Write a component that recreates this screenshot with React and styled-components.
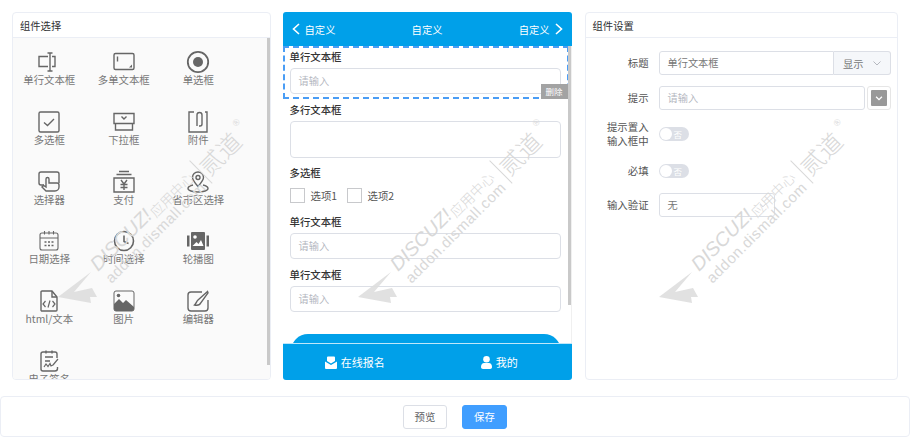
import React from 'react';
import styled, { createGlobalStyle } from 'styled-components';

const GlobalStyle = createGlobalStyle`
  html, body {
    margin: 0;
    padding: 0;
    background: #fff;
    font-family: "Noto Sans CJK SC", "Liberation Sans", sans-serif;
    color: #333;
  }
  * { box-sizing: border-box; }
`;

const Page = styled.div`
  position: relative;
  width: 910px;
  height: 437px;
  overflow: hidden;
`;

const Columns = styled.div`
  display: flex;
  gap: 12px;
  height: 396px;
  padding: 12px 12px 16px;
`;

const Panel = styled.section`
  width: ${(p) => p.$width}px;
  background: #fff;
  border: 1px solid #ebeef5;
  border-radius: 4px;
  display: flex;
  flex-direction: column;
  overflow: hidden;
`;

const PanelTitle = styled.div`
  height: 25px;
  flex: none;
  padding-left: 7px;
  font-size: 10.3px;
  line-height: 25px;
  color: #303133;
  border-bottom: 1px solid #ebeef5;
`;

const PickerBody = styled.div`
  position: relative;
  flex: 1;
  background: #fafafa;
  overflow: hidden;
`;

const PickerGrid = styled.div`
  display: grid;
  grid-template-columns: repeat(3, 74.5px);
  grid-auto-rows: 59.75px;
  padding-top: 12px;
  margin-left: -1px;
`;

const PickerItem = styled.div`
  display: flex;
  flex-direction: column;
  align-items: center;
  font-size: 10.4px;
  line-height: 14px;
  color: #777;
  white-space: nowrap;
`;

const IconBox = styled.svg`
  width: 24px;
  height: 24px;
  margin-bottom: -1px;
  fill: none;
  stroke: #666;
  stroke-width: 1.4;
  flex: none;
`;

const Scrollbar = styled.div`
  position: absolute;
  top: ${(p) => p.$top}px;
  right: 0;
  width: 3px;
  height: ${(p) => p.$height}px;
  background: #c9c9c9;
`;

const Phone = styled.section`
  width: 289px;
  flex: none;
  margin-right: 1px;
  display: flex;
  flex-direction: column;
  border-radius: 3px;
  overflow: hidden;
  background: #fff;
`;

const PhoneHeader = styled.header`
  height: 34px;
  flex: none;
  background: #00a0e9;
  color: #fff;
  font-size: 10.3px;
  display: grid;
  grid-template-columns: 1fr auto 1fr;
  align-items: center;
  padding: 0 8px;
`;

const HeaderSide = styled.div`
  display: flex;
  align-items: center;
  gap: 2px;
  justify-content: ${(p) => (p.$right ? 'flex-end' : 'flex-start')};
`;

const PhoneBody = styled.div`
  position: relative;
  flex: 1;
  overflow: hidden;
  border-right: 1px solid #f0f0f0;
`;

const Field = styled.div`
  position: relative;
  height: ${(p) => p.$height || 53}px;
  padding: 4px 8px 0 7px;
`;

const ActiveField = styled(Field)`
  width: 286px;
  height: 53px;
  padding: 2px 8px 0 5px;
  border: 2px dashed #4a9df5;
`;

const FieldLabel = styled.div`
  font-size: 10.4px;
  line-height: 14px;
  font-weight: 500;
  color: #333;
  margin-bottom: 4px;
`;

const FakeInput = styled.div`
  width: 271px;
  height: ${(p) => p.$height || 26}px;
  border: 1px solid #dcdfe6;
  border-radius: 4px;
  padding-left: 8px;
  font-size: 10.2px;
  line-height: 24px;
  color: #b5b8bf;
`;

const DeleteTag = styled.div`
  position: absolute;
  right: -1px;
  bottom: -2px;
  width: 27px;
  height: 15px;
  background: #a3a3a3;
  color: #fff;
  font-size: 8.5px;
  line-height: 15px;
  text-align: center;
`;

const CheckRow = styled.div`
  display: flex;
  align-items: center;
  margin-top: 8px;
  font-size: 10.4px;
  color: #555;
`;

const CheckBox = styled.span`
  width: 15px;
  height: 15px;
  border: 1px solid #c8c9cc;
  margin-right: 6px;
`;

const CheckText = styled.span`
  width: 36px;
`;

const SubmitButton = styled.div`
  position: absolute;
  left: 8px;
  bottom: -24px;
  width: 270px;
  height: 33px;
  background: #00a0e9;
  border-radius: 17px 17px 0 0;
`;

const TabBar = styled.nav`
  height: 37px;
  flex: none;
  background: #00a0e9;
  border-top: 1px solid #bfe7fa;
  display: grid;
  grid-template-columns: 1fr 1fr;
  color: #fff;
  font-size: 11px;
  position: relative;
`;

const Tab = styled.div`
  display: flex;
  align-items: center;
  justify-content: center;
  gap: 4px;
`;

const SettingsBody = styled.div`
  flex: 1;
  padding: 13px 6px 0 0;
`;

const FormRow = styled.div`
  display: flex;
  align-items: center;
  height: ${(p) => p.$height}px;
  margin-bottom: ${(p) => p.$gap || 0}px;
`;

const RowLabel = styled.label`
  width: 63px;
  margin-right: 10px;
  flex: none;
  text-align: right;
  font-size: 10.4px;
  line-height: 14px;
  color: #555;
`;

const TextBox = styled.div`
  flex: ${(p) => (p.$width ? 'none' : 1)};
  width: ${(p) => (p.$width ? `${p.$width}px` : 'auto')};
  height: 24px;
  border: 1px solid #dcdfe6;
  border-radius: 3px;
  padding: 0 6px 0 8px;
  font-size: 10.2px;
  line-height: 22px;
  color: ${(p) => (p.$placeholder ? '#b5b8bf' : '#777')};
  display: flex;
  align-items: center;
  justify-content: space-between;
  background: #fff;
`;

const InputGroup = styled.div`
  flex: 1;
  display: flex;
`;

const GroupInput = styled(TextBox)`
  border-radius: 3px 0 0 3px;
`;

const GroupSelect = styled.div`
  width: 57px;
  height: 24px;
  flex: none;
  background: #f5f7fa;
  border: 1px solid #dcdfe6;
  border-left: none;
  border-radius: 0 3px 3px 0;
  font-size: 10.2px;
  color: #777;
  display: flex;
  align-items: center;
  gap: 8px;
  padding-left: 9px;
`;

const ColorPicker = styled.div`
  width: 24px;
  height: 24px;
  margin-left: 2px;
  flex: none;
  border: 1px solid #e6e6e6;
  border-radius: 3px;
  padding: 3px;
`;

const ColorSwatch = styled.div`
  width: 100%;
  height: 100%;
  background: #999;
  border-radius: 1px;
  display: flex;
  align-items: center;
  justify-content: center;
`;

const Switch = styled.div`
  position: relative;
  width: 30px;
  height: 14px;
  border-radius: 7px;
  background: #dcdfe6;
  color: #fff;
  font-size: 8.5px;
  line-height: 14px;
  padding-left: 15px;
`;

const SwitchKnob = styled.span`
  position: absolute;
  left: 1px;
  top: 1px;
  width: 12px;
  height: 12px;
  border-radius: 50%;
  background: #fff;
`;

const Footer = styled.footer`
  position: absolute;
  left: 0;
  top: 396px;
  width: 910px;
  height: 41px;
  border: 1px solid #ebeef5;
  border-radius: 4px;
  display: flex;
  align-items: center;
  justify-content: center;
  gap: 15px;
`;

const Button = styled.div`
  width: ${(p) => p.$width}px;
  height: 24px;
  border-radius: 3px;
  font-size: 10.4px;
  line-height: 22px;
  text-align: center;
  color: ${(p) => (p.$primary ? '#fff' : '#606266')};
  background: ${(p) => (p.$primary ? '#409eff' : '#fff')};
  border: 1px solid ${(p) => (p.$primary ? '#409eff' : '#dcdfe6')};
`;

const Watermark = styled.div`
  position: absolute;
  left: ${(p) => p.$left}px;
  top: 240px;
  width: 200px;
  height: 70px;
  pointer-events: none;
`;

const PlaneIcon = styled.svg`
  position: absolute;
  left: 0;
  top: 32px;
  width: 40px;
  height: 33px;
  fill: #dedede;
  opacity: 0.9;
`;

const WatermarkLines = styled.div`
  position: absolute;
  left: 28px;
  top: 20px;
  transform-origin: left top;
  transform: rotate(-45deg);
  color: #d8d8d8;
  white-space: nowrap;
  line-height: 1;
`;

const WatermarkTop = styled.div`
  display: flex;
  align-items: center;
  height: 22px;
`;

const Brand = styled.span`
  font-family: "Liberation Sans", sans-serif;
  font-style: italic;
  font-size: 19.5px;
`;

const BrandCn = styled.span`
  font-size: 14px;
  font-weight: 300;
  margin: 6px 0 0 1px;
`;

const BrandSep = styled.span`
  width: 1px;
  height: 32px;
  background: #d8d8d8;
  margin: 16px 2px 0 8px;
`;

const BrandName = styled.span`
  font-size: 24px;
  font-weight: 300;
  margin-top: 16px;
`;

const BrandMark = styled.span`
  font-family: "Liberation Sans", sans-serif;
  font-size: 9px;
  align-self: flex-start;
  margin: 5px 0 0 6px;
`;

const WatermarkSub = styled.div`
  font-family: "Liberation Sans", sans-serif;
  font-size: 15px;
  letter-spacing: 0.6px;
  margin-left: 1px;
`;

const Chevron = ({ dir, size = 12, color = '#fff', width = 1.6 }) => {
  const d = { left: 'M8 1 2.5 6 8 11', right: 'M4 1 9.5 6 4 11', down: 'M2.5 4.5 6 8l3.5-3.5' }[dir];
  return (
    <svg width={size} height={size} viewBox="0 0 12 12" fill="none" stroke={color} strokeWidth={width}>
      <path d={d} />
    </svg>
  );
};

const icons = {
  input: (
    <>
      <path d="M11 6.5H2v10h9M15 6.5h3v10h-3" />
      <path d="M13 3v18M10.5 3h5M10.5 21h5" />
    </>
  ),
  textarea: (
    <>
      <rect x="2" y="3.500" width="20" height="16" rx="1.500" />
      <path d="M5.500 6.500v5" />
      <path d="M20 17.500v-3l-3 3z" fill="#666" stroke="none" />
    </>
  ),
  radio: (
    <>
      <circle cx="12" cy="12" r="10.200" strokeWidth="1.800" />
      <circle cx="12" cy="12" r="5" fill="#666" stroke="none" />
    </>
  ),
  checkbox: (
    <>
      <rect x="2" y="2" width="20" height="20" rx="1.500" />
      <path d="m7 12.500 3.500 3L17 9" />
    </>
  ),
  select: (
    <>
      <path d="M2 3.500h20v10H2zM3.500 13.500V20h17v-6.500M3 20h18" />
      <path d="m9.500 6.500 2.500 2.500 2.500-2.500" />
    </>
  ),
  attach: (
    <>
      <path d="M8 2H3v20h18V2h-2" />
      <path d="M11 16V5a2.500 2.500 0 0 1 5 0v9a2 2 0 0 1-2 2h-1" />
    </>
  ),
  picker: (
    <>
      <path d="M7 15H4a2 2 0 0 1-2-2V4a2 2 0 0 1 2-2h16a2 2 0 0 1 2 2v9" />
      <path d="M9 21l-4-4 1.500-1.500L9 17V9a1.500 1.500 0 0 1 3 0v4h8a2 2 0 0 1 2 2v2a4 4 0 0 1-4 4z" />
    </>
  ),
  pay: (
    <>
      <path d="M7 1.500h10M4.500 4.500h15" />
      <path d="M2 8h20v14H2z" />
      <path d="m9 10 3 4 3-4M8.500 14.500h7M8.500 17.500h7M12 14v6" />
    </>
  ),
  region: (
    <>
      <path d="M12 16.500C8.500 12.500 6.500 10 6.500 7.500a5.500 5.500 0 0 1 11 0c0 2.500-2 5-5.500 9z" />
      <circle cx="12" cy="7.500" r="2" />
      <path d="M7 15c-3 .7-5 2-5 3.500C2 20.500 6.500 22 12 22s10-1.500 10-3.500c0-1.500-2-2.800-5-3.500" />
    </>
  ),
  date: (
    <>
      <rect x="3" y="4" width="18" height="17" rx="2" strokeWidth="1.100" />
      <path d="M3 9h18M7.500 2v3.500M16.500 2v3.500M12 2v3.500" strokeWidth="1.100" />
      <path d="M7.500 13h2M11 13h2M14.500 13h2M7.500 16.500h2M11 16.500h2M14.500 16.500h2" strokeWidth="1.600" />
    </>
  ),
  time: (
    <>
      <circle cx="12" cy="12" r="9.500" strokeWidth="1.600" />
      <path d="M12 6.500v6l4.500 2" strokeWidth="1.600" />
    </>
  ),
  carousel: (
    <>
      <path d="M6 3h12a1 1 0 0 1 1 1v16a1 1 0 0 1-1 1H6a1 1 0 0 1-1-1V4a1 1 0 0 1 1-1z" fill="#666" stroke="none" />
      <path d="M1 6.500h2.500v11H1zM20.500 6.500H23v11h-2.500z" fill="#666" stroke="none" />
      <circle cx="9" cy="8" r="1.800" fill="#fff" stroke="none" />
      <path d="m6.500 17 4-4 2 2 2.500-4 2.500 6z" fill="#fff" stroke="none" />
    </>
  ),
  html: (
    <>
      <path d="M5 2h10l5 6v13a1 1 0 0 1-1 1H5a1 1 0 0 1-1-1V3a1 1 0 0 1 1-1z" />
      <path d="M15 2v6h5" />
      <path d="m8.500 12-2.500 3 2.500 3M15.500 12l2.500 3-2.500 3M13 11.500l-2 7" strokeWidth="1.200" />
    </>
  ),
  image: (
    <>
      <rect x="2" y="2" width="20" height="20" rx="2" strokeWidth="1" />
      <path d="M2 20v-5l5-5 4 4 3-3 8 7v2a2 2 0 0 1-2 2H4a2 2 0 0 1-2-2z" fill="#666" stroke="none" />
      <circle cx="6.500" cy="6.500" r="1.800" fill="#666" stroke="none" />
    </>
  ),
  editor: (
    <>
      <path d="M16 3H5a3 3 0 0 0-3 3v13a3 3 0 0 0 3 3h14a3 3 0 0 0 3-3v-8" />
      <path d="M21.500 2.500 12 11c-1.500 1.300-1.800 3.500-3.500 5 3 .8 5.500-.2 6.500-2.500l7-9.500z" />
    </>
  ),
  sign: (
    <>
      <path d="M20 9V5a2 2 0 0 0-2-2H6a2 2 0 0 0-2 2v15a2 2 0 0 0 2 2h12a2.500 2.500 0 0 0 2.500-2.500V18" />
      <path d="M9 1.500v3M15 1.500v3M8 8h8M8 12h5" />
      <path d="m7 18 2-3 2 2.500 2-3 1 2.500 2-1M21 10l-5 6" strokeWidth="1.200" />
    </>
  ),
};

const pickerItems = [
  ['input', '单行文本框'],
  ['textarea', '多单文本框'],
  ['radio', '单选框'],
  ['checkbox', '多选框'],
  ['select', '下拉框'],
  ['attach', '附件'],
  ['picker', '选择器'],
  ['pay', '支付'],
  ['region', '省市区选择'],
  ['date', '日期选择'],
  ['time', '时间选择'],
  ['carousel', '轮播图'],
  ['html', 'html/文本'],
  ['image', '图片'],
  ['editor', '编辑器'],
  ['sign', '电子签名'],
];

const WatermarkMark = ({ left }) => (
  <Watermark $left={left}>
    <PlaneIcon viewBox="0 0 40 33">
      <path d="M0 25 33 0 16 20 34 16 39 25 32 25 33 31z" />
    </PlaneIcon>
    <WatermarkLines>
      <WatermarkTop>
        <Brand>DISCUZ!</Brand>
        <BrandCn>应用中心</BrandCn>
        <BrandSep />
        <BrandName>贰道</BrandName>
        <BrandMark>®</BrandMark>
      </WatermarkTop>
      <WatermarkSub>addon.dismall.com</WatermarkSub>
    </WatermarkLines>
  </Watermark>
);

const App = () => {
  return (
    <Page>
      <GlobalStyle />
      <Columns>
        <Panel $width={259}>
          <PanelTitle>组件选择</PanelTitle>
          <PickerBody>
            <PickerGrid>
              {pickerItems.map(([icon, label]) => (
                <PickerItem key={label}>
                  <IconBox viewBox="0 0 24 24">{icons[icon]}</IconBox>
                  {label}
                </PickerItem>
              ))}
            </PickerGrid>
            <Scrollbar $top={0} $height={327} />
          </PickerBody>
        </Panel>

        <Phone>
          <PhoneHeader>
            <HeaderSide>
              <Chevron dir="left" />
              自定义
            </HeaderSide>
            <span>自定义</span>
            <HeaderSide $right>
              自定义
              <Chevron dir="right" />
            </HeaderSide>
          </PhoneHeader>
          <PhoneBody>
            <ActiveField>
              <FieldLabel>单行文本框</FieldLabel>
              <FakeInput>请输入</FakeInput>
              <DeleteTag>删除</DeleteTag>
            </ActiveField>
            <Field $height={63}>
              <FieldLabel>多行文本框</FieldLabel>
              <FakeInput $height={37} />
            </Field>
            <Field $height={49}>
              <FieldLabel>多选框</FieldLabel>
              <CheckRow>
                <CheckBox />
                <CheckText>选项1</CheckText>
                <CheckBox />
                <CheckText>选项2</CheckText>
              </CheckRow>
            </Field>
            <Field>
              <FieldLabel>单行文本框</FieldLabel>
              <FakeInput>请输入</FakeInput>
            </Field>
            <Field>
              <FieldLabel>单行文本框</FieldLabel>
              <FakeInput>请输入</FakeInput>
            </Field>
            <SubmitButton />
            <Scrollbar $top={0} $height={259} />
          </PhoneBody>
          <TabBar>
            <Tab>
              <svg width="12" height="13" viewBox="0 0 12 13" fill="#fff">
                <path d="M2 5V1.500A1 1 0 0 1 3 .5h6a1 1 0 0 1 1 1V5L6 7.500z" />
                <path d="M0 5.500 6 9l6-3.500V12a1 1 0 0 1-1 1H1a1 1 0 0 1-1-1z" />
              </svg>
              在线报名
            </Tab>
            <Tab>
              <svg width="11" height="13" viewBox="0 0 11 13" fill="#fff">
                <circle cx="5.500" cy="3.300" r="3.300" />
                <path d="M0 11c0-2.500 1.500-4 3-4h5c1.500 0 3 1.500 3 4 0 1.200-.8 2-2 2H2c-1.200 0-2-.8-2-2z" />
              </svg>
              我的
            </Tab>
          </TabBar>
        </Phone>

        <Panel $width={314}>
          <PanelTitle>组件设置</PanelTitle>
          <SettingsBody>
            <FormRow $height={24} $gap={11}>
              <RowLabel>标题</RowLabel>
              <InputGroup>
                <GroupInput>单行文本框</GroupInput>
                <GroupSelect>
                  显示
                  <Chevron dir="down" color="#b5b8bf" width={1} />
                </GroupSelect>
              </InputGroup>
            </FormRow>
            <FormRow $height={24} $gap={10}>
              <RowLabel>提示</RowLabel>
              <InputGroup>
                <TextBox $placeholder>请输入</TextBox>
                <ColorPicker>
                  <ColorSwatch>
                    <Chevron dir="down" size={10} />
                  </ColorSwatch>
                </ColorPicker>
              </InputGroup>
            </FormRow>
            <FormRow $height={28} $gap={16}>
              <RowLabel>提示置入<br />输入框中</RowLabel>
              <Switch>否<SwitchKnob /></Switch>
            </FormRow>
            <FormRow $height={14} $gap={15}>
              <RowLabel>必填</RowLabel>
              <Switch>否<SwitchKnob /></Switch>
            </FormRow>
            <FormRow $height={24}>
              <RowLabel>输入验证</RowLabel>
              <TextBox $width={116}>
                无
                <Chevron dir="down" size={10} color="#c0c4cc" width={1} />
              </TextBox>
            </FormRow>
          </SettingsBody>
        </Panel>
      </Columns>

      <WatermarkMark left={58} />
      <WatermarkMark left={358} />
      <WatermarkMark left={659} />

      <Footer>
        <Button $width={44}>预览</Button>
        <Button $width={45} $primary>保存</Button>
      </Footer>
    </Page>
  );
};

export default App;
